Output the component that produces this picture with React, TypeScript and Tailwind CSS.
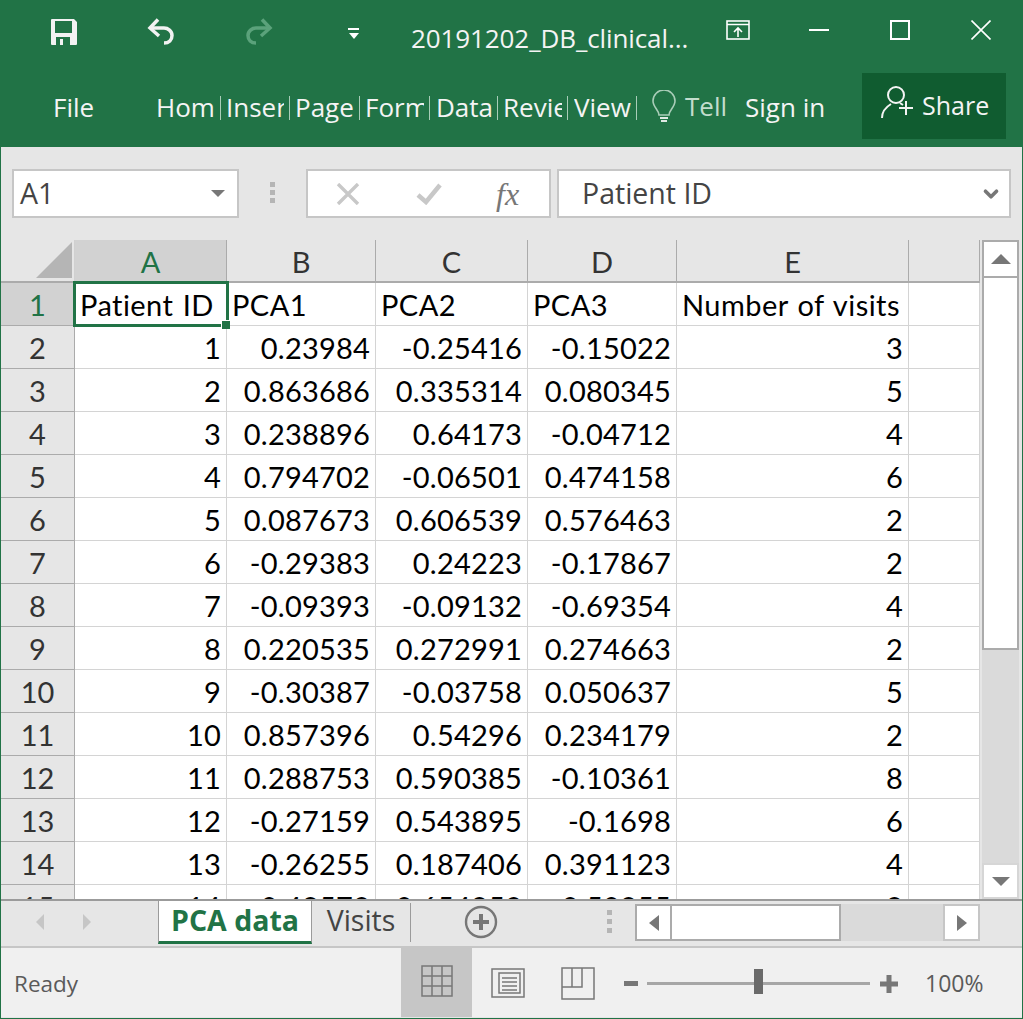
import React from 'react';
import { ChevronDown } from 'lucide-react';

const UI_FONT = "font-['Open_Sans','Noto_Sans',sans-serif]";
const CELL_FONT = "font-['Lato','Carlito',sans-serif]";

const columns = ['A', 'B', 'C', 'D', 'E', ''];

const rows: (string | number)[][] = [
  ['Patient ID', 'PCA1', 'PCA2', 'PCA3', 'Number of visits'],
  [1, 0.23984, -0.25416, -0.15022, 3],
  [2, 0.863686, 0.335314, 0.080345, 5],
  [3, 0.238896, 0.64173, -0.04712, 4],
  [4, 0.794702, -0.06501, 0.474158, 6],
  [5, 0.087673, 0.606539, 0.576463, 2],
  [6, -0.29383, 0.24223, -0.17867, 2],
  [7, -0.09393, -0.09132, -0.69354, 4],
  [8, 0.220535, 0.272991, 0.274663, 2],
  [9, -0.30387, -0.03758, 0.050637, 5],
  [10, 0.857396, 0.54296, 0.234179, 2],
  [11, 0.288753, 0.590385, -0.10361, 8],
  [12, -0.27159, 0.543895, -0.1698, 6],
  [13, -0.26255, 0.187406, 0.391123, 4],
  [14, -0.48573, 0.654853, 0.50255, 8],
];

const ribbonTabs = [
  { label: 'Home', width: 'w-[70px]', pad: 'pl-[5px]' },
  { label: 'Insert', width: 'w-[69px]', pad: 'pl-[5px]' },
  { label: 'Page', width: 'w-[70px]', pad: 'pl-[5px]' },
  { label: 'Formulas', width: 'w-[70px]', pad: 'pl-[5px]' },
  { label: 'Data', width: 'w-[68px]', pad: 'pl-[6px]' },
  { label: 'Review', width: 'w-[70px]', pad: 'pl-[5px]' },
  { label: 'View', width: 'w-[69px]', pad: 'pl-[6px]' },
];

const GRID_COLS = 'grid grid-cols-[74px_152px_149px_152px_149px_232px_71px] grid-rows-[43px]';

const SaveIcon = () => (
  <svg width="26" height="26" viewBox="0 0 26 26" className="block">
    <path fill="#f2f2f2" fillRule="evenodd" d="M1 0h22l3 3v22a1 1 0 0 1-1 1H1a1 1 0 0 1-1-1V1a1 1 0 0 1 1-1zM4 2v12h17V2zM5 18v8h14v-8zM9 20h3v6H9z" />
  </svg>
);

const UndoIcon = ({ flip, dim }: { flip?: boolean; dim?: boolean }) => (
  <svg width="28" height="28" viewBox="0 0 28 28" className={`block ${flip ? '-scale-x-100' : ''}`}>
    <path d="M11 2.5L3 11l9 8" fill="none" stroke={dim ? '#5ba27b' : '#f2f2f2'} strokeWidth="3.5" />
    <path d="M4 11h13c4 0 8 3 8 7.5s-3 7.5-8 7.5" fill="none" stroke={dim ? '#5ba27b' : '#f2f2f2'} strokeWidth="3.5" />
  </svg>
);

const TitleBar = () => (
  <div className="flex h-[64px] items-start text-white">
    <div className="ml-[51px] mt-[19px]"><SaveIcon /></div>
    <div className="ml-[70px] mt-[17px]"><UndoIcon /></div>
    <div className="ml-[70px] mt-[17px]"><UndoIcon flip dim /></div>
    <div className="ml-[75px] mt-[28px] w-[11px]">
      <div className="h-[1.5px] bg-white" />
      <div className="mx-auto mt-[3px] h-0 w-0 border-x-[5px] border-t-[6px] border-x-transparent border-t-white" />
    </div>
    <div className={`ml-[52px] mt-[20px] w-[290px] whitespace-nowrap text-[26px] leading-[36px] tracking-[-0.1px] text-[#f4f4f4] ${UI_FONT}`}>
      20191202_DB_clinical...
    </div>
    <svg width="24" height="20" viewBox="0 0 24 20" className="ml-[25px] mt-[20px] block" fill="none" stroke="#fff" strokeWidth="1.6">
      <rect x="1" y="1" width="22" height="18" />
      <path d="M1 4.5h22M12 17V8M8 12l4-4 4 4" />
    </svg>
    <div className="ml-[59px] mt-[29px] h-[2px] w-[20px] bg-white" />
    <div className="ml-[61px] mt-[20px] h-[20px] w-[20px] border-2 border-white" />
    <svg width="20" height="20" viewBox="0 0 20 20" className="ml-[61px] mt-[20px] block" stroke="#fff" strokeWidth="1.6">
      <path d="M0.5 0.5l19 19M19.5 0.5l-19 19" />
    </svg>
  </div>
);

const RibbonBar = () => (
  <div className={`flex h-[83px] items-start text-[#f4f4f4] ${UI_FONT}`}>
    <div className="ml-[53px] mt-[24px] w-[98px] text-[26px] leading-[38px]">File</div>
    {ribbonTabs.map((tab) => (
      <div key={tab.label} className={`mt-[30px] flex h-[28px] shrink-0 items-center justify-between ${tab.width} ${tab.pad}`}>
        <div className="-mt-[2px] mr-[5px] h-[38px] flex-1 overflow-hidden whitespace-nowrap text-[26px] leading-[38px]">{tab.label}</div>
        <div className="h-[24px] w-px shrink-0 bg-[#a9cdb8]" />
      </div>
    ))}
    <svg width="26" height="34" viewBox="0 0 26 34" className="ml-[14px] mt-[26px] block" fill="none">
      <path d="M8 25c0-5-6-8-6-14a11 11 0 0 1 22 0c0 6-6 9-6 14z" stroke="#a9cdb8" strokeWidth="1.6" />
      <path d="M9 28h8M10 31h6" stroke="#dfe9e3" strokeWidth="2" />
    </svg>
    <div className="ml-[8px] mt-[23px] w-[60px] text-[26px] leading-[38px] text-[#c3ddcd]">Tell</div>
    <div className="mt-[24px] w-[117px] whitespace-nowrap text-[26px] leading-[38px]">Sign in</div>
    <div className="mt-[9px] flex h-[66px] w-[144px] items-center bg-[#105c30] pl-[19px]">
      <svg width="32" height="34" viewBox="0 0 32 34" fill="none" stroke="#f4f4f4" strokeWidth="2" className="-mt-[6px] block">
        <circle cx="15" cy="9" r="8" />
        <path d="M1 32c0-7 4-11 9-14M19 17l3 2" />
        <path d="M18 22h14M25 15v14" />
      </svg>
      <span className="-mt-[2px] ml-[9px] text-[25px] leading-[38px]">Share</span>
    </div>
  </div>
);

const FormulaBar = () => (
  <div className={`flex h-[93px] items-start bg-[#e6e6e6] pl-[11px] pt-[22px] ${UI_FONT}`}>
    <div className="flex h-[49px] w-[227px] shrink-0 items-center justify-between border-2 border-[#c6c6c6] bg-white pl-[6px] pr-[12px] text-[28.5px] text-[#444444]">
      <span>A1</span>
      <div className="h-0 w-0 border-x-[7px] border-t-[7px] border-x-transparent border-t-[#777777]" />
    </div>
    <div className="ml-[31px] mt-[13px] flex w-[5px] shrink-0 flex-col gap-[3px]">
      <div className="h-[5px] bg-[#b5b5b5]" />
      <div className="h-[5px] bg-[#b5b5b5]" />
      <div className="h-[5px] bg-[#b5b5b5]" />
    </div>
    <div className="ml-[31px] flex h-[49px] w-[245px] shrink-0 items-center border-2 border-[#c6c6c6] bg-white">
      <svg width="24" height="22" viewBox="0 0 24 22" className="ml-[28px] block" stroke="#c8c8c8" strokeWidth="3.4">
        <path d="M2 1l20 20M22 1L2 21" />
      </svg>
      <svg width="26" height="22" viewBox="0 0 26 22" className="ml-[56px] block" fill="none" stroke="#c8c8c8" strokeWidth="4.5">
        <path d="M2 12l8 7L24 2" />
      </svg>
      <span className="ml-[54px] font-['Liberation_Serif',serif] text-[32px] italic leading-none text-[#777777]">fx</span>
    </div>
    <div className="ml-[6px] flex h-[49px] w-[454px] shrink-0 items-center justify-between border-2 border-[#c6c6c6] bg-white pl-[23px] pr-[7px] text-[28.5px] text-[#444444]">
      <span>Patient ID</span>
      <ChevronDown size={22} strokeWidth={4} color="#777777" />
    </div>
  </div>
);

const SheetGrid = () => (
  <div className={`h-[659px] w-[979px] overflow-hidden bg-white text-[29px] leading-[32px] text-black ${CELL_FONT}`}>
    <div className={`${GRID_COLS} h-[43px] bg-[#e6e6e6] text-[#333333]`}>
      <div className="relative border-b-2 border-[#ababab] border-r border-r-[#d0d0d0]">
        <div className="absolute bottom-[3px] right-[2px] h-0 w-0 border-b-[36px] border-l-[36px] border-b-[#b5b5b5] border-l-transparent" />
      </div>
      {columns.map((col, i) => (
        <div
          key={i}
          className={`flex items-center justify-center border-b-2 border-r border-[#ababab] pt-[2px] ${i === 0 ? 'bg-[#d2d2d2] text-[#217346]' : ''}`}
        >
          {col}
        </div>
      ))}
    </div>
    {rows.map((row, r) => (
      <div key={r} className={`${GRID_COLS} h-[43px]`}>
        <div className={`flex items-center justify-center border-b border-r border-b-[#ababab] border-r-[#ababab] pt-[2px] ${r === 0 ? 'bg-[#d2d2d2] text-[#217346]' : 'bg-[#e6e6e6] text-[#333333]'}`}>
          {r + 1}
        </div>
        {[0, 1, 2, 3, 4, 5].map((c) => {
          const isHeader = r === 0;
          const value = row[c];
          return (
            <div
              key={c}
              className={`relative flex items-center whitespace-nowrap border-b border-r border-[#d4d4d4] pt-[2px] ${isHeader ? 'justify-start pl-[5px] tracking-[0.45px] [word-spacing:1.5px]' : 'justify-end pr-[5px] tracking-[0.2px]'}`}
            >
              {value}
              {isHeader && c === 0 && (
                <div className="absolute -bottom-[2px] -left-[2px] -right-[3px] -top-[2px] z-10 border-[3px] border-[#217346]">
                  <div className="absolute -bottom-[5px] -right-[4px] h-[9px] w-[9px] border-l border-t border-white bg-[#217346]" />
                </div>
              )}
            </div>
          );
        })}
      </div>
    ))}
  </div>
);

const VerticalScroll = () => (
  <div className="ml-[2px] flex h-[659px] w-[37px] flex-col bg-[#dadada]">
    <div className="flex h-[38px] items-center justify-center border-2 border-[#ababab] bg-white">
      <div className="h-0 w-0 border-x-[10px] border-b-[10px] border-x-transparent border-b-[#777777]" />
    </div>
    <div className="h-[372px] border-2 border-t-0 border-[#ababab] bg-white" />
    <div className="flex-1" />
    <div className="flex h-[36px] items-center justify-center border-2 border-[#d6d6d6] bg-white">
      <div className="h-0 w-0 border-x-[9px] border-t-[9px] border-x-transparent border-t-[#777777]" />
    </div>
  </div>
);

const SheetTabs = () => (
  <div className={`flex h-[47px] items-start border-t-2 border-[#9b9b9b] bg-[#e6e6e6] ${UI_FONT}`}>
    <div className="ml-[35px] mt-[13px] h-0 w-0 border-y-[8px] border-r-[8px] border-y-transparent border-r-[#c6c6c6]" />
    <div className="ml-[39px] mt-[13px] h-0 w-0 border-y-[8px] border-l-[8px] border-y-transparent border-l-[#c6c6c6]" />
    <div className="ml-[67px] flex h-[43px] w-[154px] shrink-0 items-center justify-center whitespace-nowrap border-x border-b-[3px] border-x-[#9b9b9b] border-b-[#217346] bg-white pb-[2px] text-[28.5px] font-bold leading-none text-[#217346]">
      PCA data
    </div>
    <div className="mt-[2px] flex h-[39px] w-[99px] shrink-0 items-center justify-center border-r border-[#9b9b9b] pb-[5px] text-[28.5px] leading-none text-[#444444]">Visits</div>
    <svg width="34" height="34" viewBox="0 0 34 34" className="ml-[53px] mt-[4px] block" fill="none" stroke="#777777">
      <circle cx="17" cy="17" r="15" strokeWidth="2.4" />
      <path d="M17 9v16M9 17h16" strokeWidth="4" />
    </svg>
    <div className="ml-[109px] mt-[9px] flex w-[5px] flex-col gap-[4px]">
      <div className="h-[5px] bg-[#b5b5b5]" />
      <div className="h-[5px] bg-[#b5b5b5]" />
      <div className="h-[5px] bg-[#b5b5b5]" />
    </div>
    <div className="ml-[23px] mt-[3px] flex h-[37px] w-[345px] bg-[#dadada]">
      <div className="flex w-[37px] items-center justify-center border-2 border-[#ababab] bg-white">
        <div className="h-0 w-0 border-y-[8px] border-r-[10px] border-y-transparent border-r-[#777777]" />
      </div>
      <div className="w-[169px] border-2 border-l-0 border-[#ababab] bg-white" />
      <div className="flex-1" />
      <div className="flex w-[37px] items-center justify-center border-2 border-[#c6c6c6] bg-white">
        <div className="h-0 w-0 border-y-[8px] border-l-[10px] border-y-transparent border-l-[#777777]" />
      </div>
    </div>
  </div>
);

const StatusBar = () => (
  <div className={`flex h-[71px] items-start border-t-2 border-[#c6c6c6] bg-[#f0f0f0] ${UI_FONT}`}>
    <div className="ml-[13px] mt-[20px] w-[387px] text-[22.5px] leading-[32px] text-[#5a5a5a]">Ready</div>
    <div className="flex h-[69px] w-[71px] items-center justify-center bg-[#c6c6c6]">
      <svg width="32" height="32" viewBox="0 0 32 32" fill="none" stroke="#777777" strokeWidth="1.5" className="-mt-[3px] block">
        <path d="M1 1h30v30H1zM11 1v30M21 1v30M1 11h30M1 21h30" />
      </svg>
    </div>
    <svg width="34" height="30" viewBox="0 0 34 30" fill="none" stroke="#777777" strokeWidth="1.5" className="ml-[19px] mt-[20px] block">
      <path d="M1 1h32v28H1zM8 5h21v20H8zM11 10h15M11 14h15M11 18h15M11 22h15" />
    </svg>
    <svg width="34" height="33" viewBox="0 0 34 33" fill="none" stroke="#777777" strokeWidth="1.5" className="ml-[36px] mt-[19px] block">
      <path d="M1 1h32v31H1zM1 20h20V1M11 1v19" />
    </svg>
    <div className="ml-[29px] mt-[33px] h-[5px] w-[14px] bg-[#777777]" />
    <div className="relative ml-[9px] mt-[34px] h-[3px] w-[223px] bg-[#a6a6a6]">
      <div className="absolute left-[107px] top-[-13px] h-[25px] w-[9px] bg-[#6a6a6a]" />
    </div>
    <svg width="18" height="18" viewBox="0 0 18 18" className="ml-[10px] mt-[27px] block" stroke="#777777" strokeWidth="5">
      <path d="M0 9h18M9 0v18" />
    </svg>
    <div className="ml-[27px] mt-[19px] text-[23px] leading-[32px] text-[#5a5a5a]">100%</div>
  </div>
);

const App: React.FC = () => {
  return (
    <div className="h-[1019px] w-[1023px] overflow-hidden bg-[#217346]">
      <TitleBar />
      <RibbonBar />
      <div className="mx-px h-[871px] bg-[#e6e6e6]">
        <FormulaBar />
        <div className="flex">
          <SheetGrid />
          <VerticalScroll />
        </div>
        <SheetTabs />
        <StatusBar />
      </div>
    </div>
  );
};

export default App;
